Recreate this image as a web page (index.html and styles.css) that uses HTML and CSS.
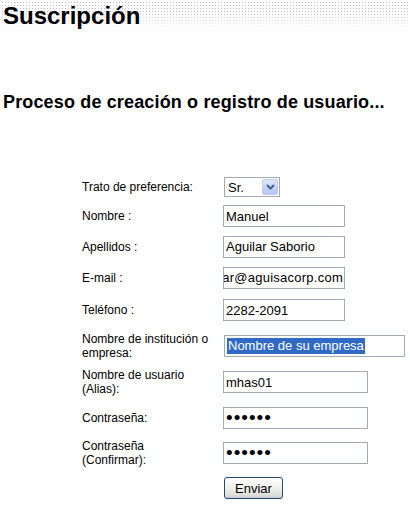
FILE: index.html
```html
<!DOCTYPE html>
<html lang="es">
<head>
<meta charset="utf-8">
<title>Suscripción</title>
<link rel="stylesheet" href="styles.css">
</head>
<body>
<header class="banner">
  <h1 class="title">Suscripción</h1>
</header>
<h2 class="subtitle">Proceso de creación o registro de usuario...</h2>
<form class="form">
  <label class="lbl">Trato de preferencia:</label>
  <div class="select">
    <select class="select-native"><option>Sr.</option><option>Sra.</option></select>
    <span class="select-btn"><svg width="9" height="6" viewBox="0 0 9 6"><path d="M1 1 L4.5 4.5 L8 1" fill="none" stroke="#4d6185" stroke-width="2"/></svg></span>
  </div>

  <label class="lbl">Nombre :</label>
  <input class="field w-s" type="text" value="Manuel">

  <label class="lbl">Apellidos :</label>
  <input class="field w-s" type="text" value="Aguilar Saborio">

  <label class="lbl">E-mail :</label>
  <input class="field w-s rtl" type="text" value="maguilar@aguisacorp.com">

  <label class="lbl">Teléfono :</label>
  <input class="field w-s" type="text" value="2282-2091">

  <label class="lbl">Nombre de institución o<br>empresa:</label>
  <div class="field w-l fake"><span class="sel">Nombre de su empresa</span></div>

  <label class="lbl">Nombre de usuario<br>(Alias):</label>
  <input class="field w-m" type="text" value="mhas01">

  <label class="lbl">Contraseña:</label>
  <input class="field w-m pw" type="password" value="123456">

  <label class="lbl">Contraseña<br>(Confirmar):</label>
  <input class="field w-m pw" type="password" value="123456">

  <span class="lbl"></span>
  <button class="btn" type="button">Enviar</button>
</form>
</body>
</html>
```

FILE: styles.css
```css
html, body {
  margin: 0;
  padding: 0;
  background: #ffffff;
}
body {
  font-family: "Liberation Sans", Arial, sans-serif;
  color: #000;
  width: 410px;
  height: 505px;
  overflow: hidden;
}
.banner {
  height: 32px;
  background-image:
    linear-gradient(to bottom, rgba(255,255,255,0) 35%, #ffffff 100%),
    linear-gradient(to right, #ffffff 2px, rgba(255,255,255,0) 2px),
    linear-gradient(to bottom, #ffffff 2px, rgba(255,255,255,0) 2px),
    linear-gradient(to bottom, #b4b4d0 0%, #bcbce4 40%, #eab0ea 75%, #f2c4f2 100%);
  background-size: 100% 100%, 3px 3px, 3px 3px, 100% 100%;
}
.title {
  margin: 0;
  padding: 2px 0 0 3px;
  font-size: 24px;
  line-height: 28px;
  font-weight: bold;
}
.subtitle {
  margin: 60px 0 0 0;
  padding-left: 3px;
  font-size: 18px;
  line-height: 21px;
  font-weight: bold;
  letter-spacing: 0.15px;
}
.form {
  margin: 60px 0 0 0;
  padding-left: 82px;
  display: grid;
  grid-template-columns: 141px auto;
  grid-template-rows: 28px 30px 31px 31px 34px 37px 36px 35px 35px 36px;
  align-items: center;
  justify-items: start;
}
.lbl {
  font-size: 12px;
  line-height: 14px;
  white-space: nowrap;
}
.field {
  box-sizing: border-box;
  height: 22px;
  margin: 0;
  padding: 0 2px;
  border: 1px solid #a3aab4;
  background: #fff;
  font-family: "Liberation Sans", Arial, sans-serif;
  font-size: 13px;
  color: #000;
  outline: none;
}
.w-s { width: 122px; }
.w-m { width: 145px; }
.w-l { width: 181px; margin-left: 1px; }
.rtl { direction: rtl; padding: 0 1px 0 0; letter-spacing: 0.25px; }
.fake {
  display: flex;
  align-items: center;
  overflow: hidden;
  white-space: nowrap;
}
.sel {
  background: #316ac5;
  color: #fff;
  line-height: 16px;
  padding: 0 1px;
}
.pw {
  font-size: 19px;
  letter-spacing: 1px;
}
.select {
  box-sizing: border-box;
  display: flex;
  align-items: stretch;
  width: 56px;
  height: 20px;
  margin-left: 1px;
  border: 1px solid #a3aab4;
  background: #fff;
}
.select-native {
  -webkit-appearance: none;
  appearance: none;
  flex: 1;
  min-width: 0;
  border: 0;
  margin: 0;
  padding: 0 0 0 3px;
  background: transparent;
  font-family: "Liberation Sans", Arial, sans-serif;
  font-size: 13px;
  color: #000;
  outline: none;
}
.select-btn {
  box-sizing: border-box;
  width: 16px;
  margin: 1px;
  display: flex;
  align-items: center;
  justify-content: center;
  border: 1px solid #bccbf0;
  border-radius: 2px;
  background: linear-gradient(to bottom, #dce6fc, #c2d3fc 60%, #b4c6f6);
}
.btn {
  box-sizing: border-box;
  width: 59px;
  height: 22px;
  margin-left: 1px;
  padding: 0;
  border: 1px solid #24487c;
  border-radius: 3px;
  background: linear-gradient(to bottom, #ffffff 0%, #f2f2ee 45%, #e2e2dc 80%, #cfcfc8 100%);
  box-shadow: inset 0 -1px 0 #c8c8d8;
  font-family: "Liberation Sans", Arial, sans-serif;
  font-size: 13px;
  color: #000;
}
```
